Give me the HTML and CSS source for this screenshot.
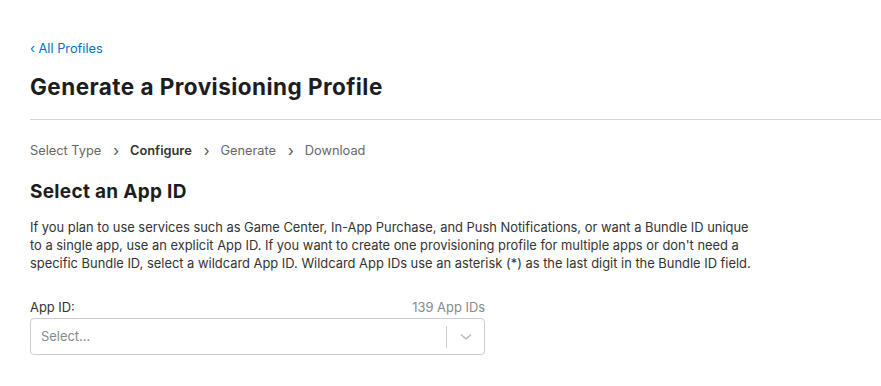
FILE: index.html
```html
<!DOCTYPE html>
<html lang="en">
<head>
    <meta charset="UTF-8">
    <title>Generate a Provisioning Profile</title>
    <link rel="stylesheet" href="styles.css">
</head>
<body>
    <!-- Page header -->
    <div class="page-header">
        <a href="#" class="back-link">&lsaquo; All Profiles</a>
        <h1>Generate a Provisioning Profile</h1>
    </div>

    <!-- Steps -->
    <div class="content">
        <div class="steps">
            <span class="step">Select Type</span>
            <span class="step-sep">&rsaquo;</span>
            <span class="step current">Configure</span>
            <span class="step-sep">&rsaquo;</span>
            <span class="step">Generate</span>
            <span class="step-sep">&rsaquo;</span>
            <span class="step">Download</span>
        </div>

        <h2>Select an App ID</h2>
        <p class="intro">If you plan to use services such as Game Center, In-App Purchase, and Push Notifications, or want a Bundle ID unique to a single app, use an explicit App ID. If you want to create one provisioning profile for multiple apps or don't need a specific Bundle ID, select a wildcard App ID. Wildcard App IDs use an asterisk (*) as the last digit in the Bundle ID field.</p>

        <div class="field">
            <div class="field-top">
                <label class="field-label">App ID:</label>
                <span class="field-count">139 App IDs</span>
            </div>
            <div class="select-box">
                <span class="select-placeholder">Select...</span>
                <span class="select-divider"></span>
                <span class="select-arrow">
                    <svg width="12" height="8" viewBox="0 0 12 8"><path d="M1 1.5 L6 6 L11 1.5" fill="none" stroke="#bbb" stroke-width="1.5"/></svg>
                </span>
            </div>
        </div>
    </div>
</body>
</html>
```

FILE: styles.css
```css
* {
    margin: 0;
    padding: 0;
    box-sizing: border-box;
    font-family: Inter, 'Noto Sans', sans-serif;
}

body {
    background: #fff;
    color: #1d1d1f;
}

.page-header {
    margin-left: 30px;
    padding-top: 40px;
    padding-bottom: 18px;
    border-bottom: 1px solid #d6d6d6;
}

.back-link {
    display: block;
    color: #0070c9;
    text-decoration: none;
    font-size: 12.8px;
    line-height: 17px;
    margin-bottom: 16px;
}

h1 {
    font-size: 22.5px;
    font-weight: 700;
    letter-spacing: 0.45px;
    line-height: 28px;
    color: #1d1d1f;
}

.content {
    padding: 22px 30px 0;
}

.steps {
    display: flex;
    align-items: center;
    font-size: 12.8px;
    line-height: 17px;
    color: #666;
}

.step-sep {
    margin: 0 11px 0 12px;
    color: #555;
    font-size: 15px;
}

.step.current {
    font-weight: 600;
    color: #333;
}

h2 {
    font-size: 19px;
    font-weight: 700;
    letter-spacing: 0.3px;
    line-height: 24px;
    margin-top: 21px;
    color: #1d1d1f;
}

.intro {
    margin-top: 15px;
    max-width: 728px;
    font-size: 12.9px;
    line-height: 18px;
    color: #333;
}

.field {
    width: 455px;
    margin-top: 22px;
}

.field-top {
    display: flex;
    justify-content: space-between;
    align-items: flex-end;
    font-size: 12.9px;
    line-height: 17px;
}

.field-label {
    color: #333;
}

.field-count {
    color: #888;
    margin-top: 4px;
}

.select-box {
    display: flex;
    align-items: center;
    height: 37px;
    border: 1px solid #ccc;
    border-radius: 4px;
    margin-top: 2px;
}

.select-placeholder {
    flex: 1;
    padding-left: 10px;
    font-size: 12.9px;
    color: #888;
}

.select-divider {
    width: 1px;
    height: 22px;
    background: #ccc;
}

.select-arrow {
    display: flex;
    justify-content: center;
    align-items: center;
    width: 37px;
}
```
